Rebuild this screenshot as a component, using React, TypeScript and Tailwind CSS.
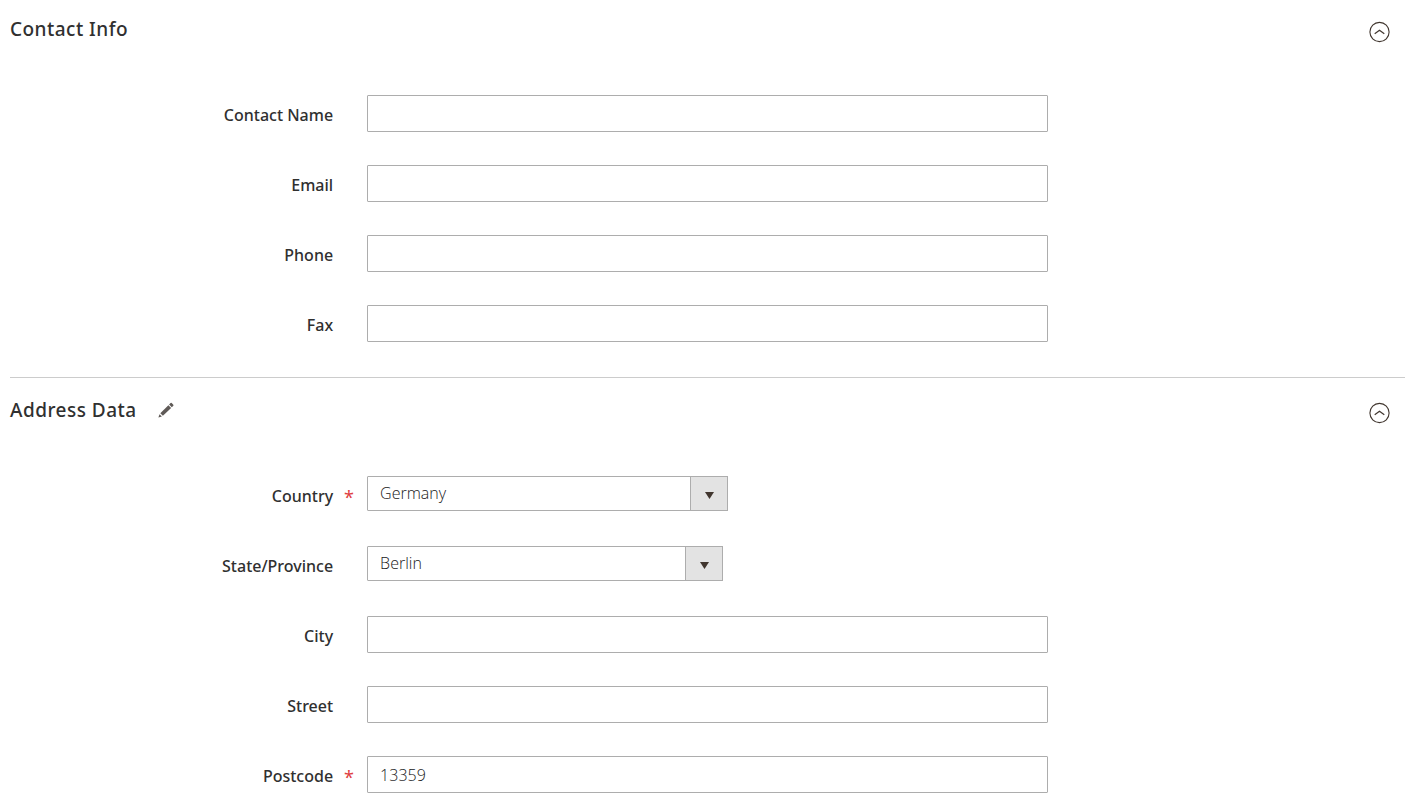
import React, { useState } from 'react';

function CollapseIcon({ open }: { open: boolean }) {
  return (
    <svg
      width="22"
      height="22"
      viewBox="0 0 22 22"
      fill="none"
      stroke="#41362f"
      className={open ? '' : 'rotate-180'}
      aria-hidden="true"
    >
      <circle cx="10.5" cy="11" r="9.6" strokeWidth="1.1" />
      <path d="M5.7 12.8 10.5 9.2l4.8 3.6" strokeWidth="1.2" />
    </svg>
  );
}

function PencilIcon() {
  return (
    <svg width="16" height="16" viewBox="0 0 16 16" fill="#5f5a57" aria-hidden="true">
      <path d="M2.3 11.2 10.4 3.3l2.7 2.7-8.2 7.8z" />
      <path d="M11.1 2.6 12.6 1.1q.6-.5 1.1 0L15.3 2.7q.5.6 0 1.1L13.8 5.3z" />
      <path d="M1.5 12.2 3.9 14.5.4 15.6z" />
    </svg>
  );
}

function Section({ title, editable, children }: { title: string; editable?: boolean; children: React.ReactNode }) {
  const [open, setOpen] = useState(true);

  return (
    <section className="border-b border-[#cccccc] pt-[3px] pb-[35px] first:pt-0 last:border-b-0">
      <div className="flex items-center justify-between pt-[14px] pr-[14px]">
        <div className="flex items-center gap-[21px]">
          <h2 className="font-['Noto_Sans','Open_Sans',sans-serif] text-[19px] leading-[30px] font-medium tracking-wide text-[#303030]">{title}</h2>
          {editable && (
            <button type="button" aria-label={`Edit ${title}`}>
              <PencilIcon />
            </button>
          )}
        </div>
        <button
          type="button"
          className="mt-[6px]"
          aria-label={`Toggle ${title}`}
          aria-expanded={open}
          onClick={() => setOpen(!open)}
        >
          <CollapseIcon open={open} />
        </button>
      </div>
      {open && <div className="space-y-[33px] pt-[51px]">{children}</div>}
    </section>
  );
}

function Field({ id, label, required, children }: { id: string; label: string; required?: boolean; children: React.ReactNode }) {
  return (
    <div className="flex h-[37px] items-start">
      <label htmlFor={id} className="flex w-[25.6%] shrink-0 items-center justify-end pt-2 font-['Noto_Sans','Open_Sans',sans-serif] text-base leading-6 font-medium text-[#303030]">
        {label}
        <span className="w-[34px] pt-0.5 pl-[11px] text-lg leading-[22px] font-normal text-[#e04040]">{required && '*'}</span>
      </label>
      {children}
    </div>
  );
}

function TextField({ id, label, required, value }: { id: string; label: string; required?: boolean; value?: string }) {
  return (
    <Field id={id} label={label} required={required}>
      <input
        id={id}
        type="text"
        required={required}
        defaultValue={value}
        className="h-[37px] w-[48.8%] rounded-[1px] border border-[#adadad] bg-white px-3 text-base font-light text-[#202020] shadow-none outline-none focus:border-[#007bdb]"
      />
    </Field>
  );
}

function SelectField({
  id,
  label,
  required,
  options,
  className,
}: {
  id: string;
  label: string;
  required?: boolean;
  options: string[];
  className: string;
}) {
  return (
    <Field id={id} label={label} required={required}>
      <div className={`relative ${className}`}>
        <select
          id={id}
          required={required}
          className="h-[35px] w-full appearance-none rounded-[1px] border border-[#adadad] bg-white pr-12 pb-0.5 pl-3 text-base leading-6 font-light text-[#202020] outline-none focus:border-[#007bdb]"
        >
          {options.map((option) => (
            <option key={option}>{option}</option>
          ))}
        </select>
        <span className="pointer-events-none absolute inset-y-0 right-0 flex w-[38px] items-center justify-center border border-[#adadad] bg-[#e3e3e3] pt-1">
          <svg width="9" height="7" viewBox="0 0 9 7" fill="#41362f" aria-hidden="true">
            <path d="M0 0h9L4.5 7z" />
          </svg>
        </span>
      </div>
    </Field>
  );
}

export default function App() {
  return (
    <form className="bg-white pr-[7px] pl-[10px] font-['Open_Sans',sans-serif]">
      <Section title="Contact Info">
        <TextField id="contact_name" label="Contact Name" />
        <TextField id="email" label="Email" />
        <TextField id="phone" label="Phone" />
        <TextField id="fax" label="Fax" />
      </Section>
      <Section title="Address Data" editable>
        <SelectField id="country" label="Country" required options={['Germany', 'Austria', 'Switzerland']} className="w-[361px]" />
        <SelectField id="region" label="State/Province" options={['Berlin', 'Brandenburg', 'Hamburg']} className="w-[356px]" />
        <TextField id="city" label="City" />
        <TextField id="street" label="Street" />
        <TextField id="postcode" label="Postcode" required value="13359" />
      </Section>
    </form>
  );
}
